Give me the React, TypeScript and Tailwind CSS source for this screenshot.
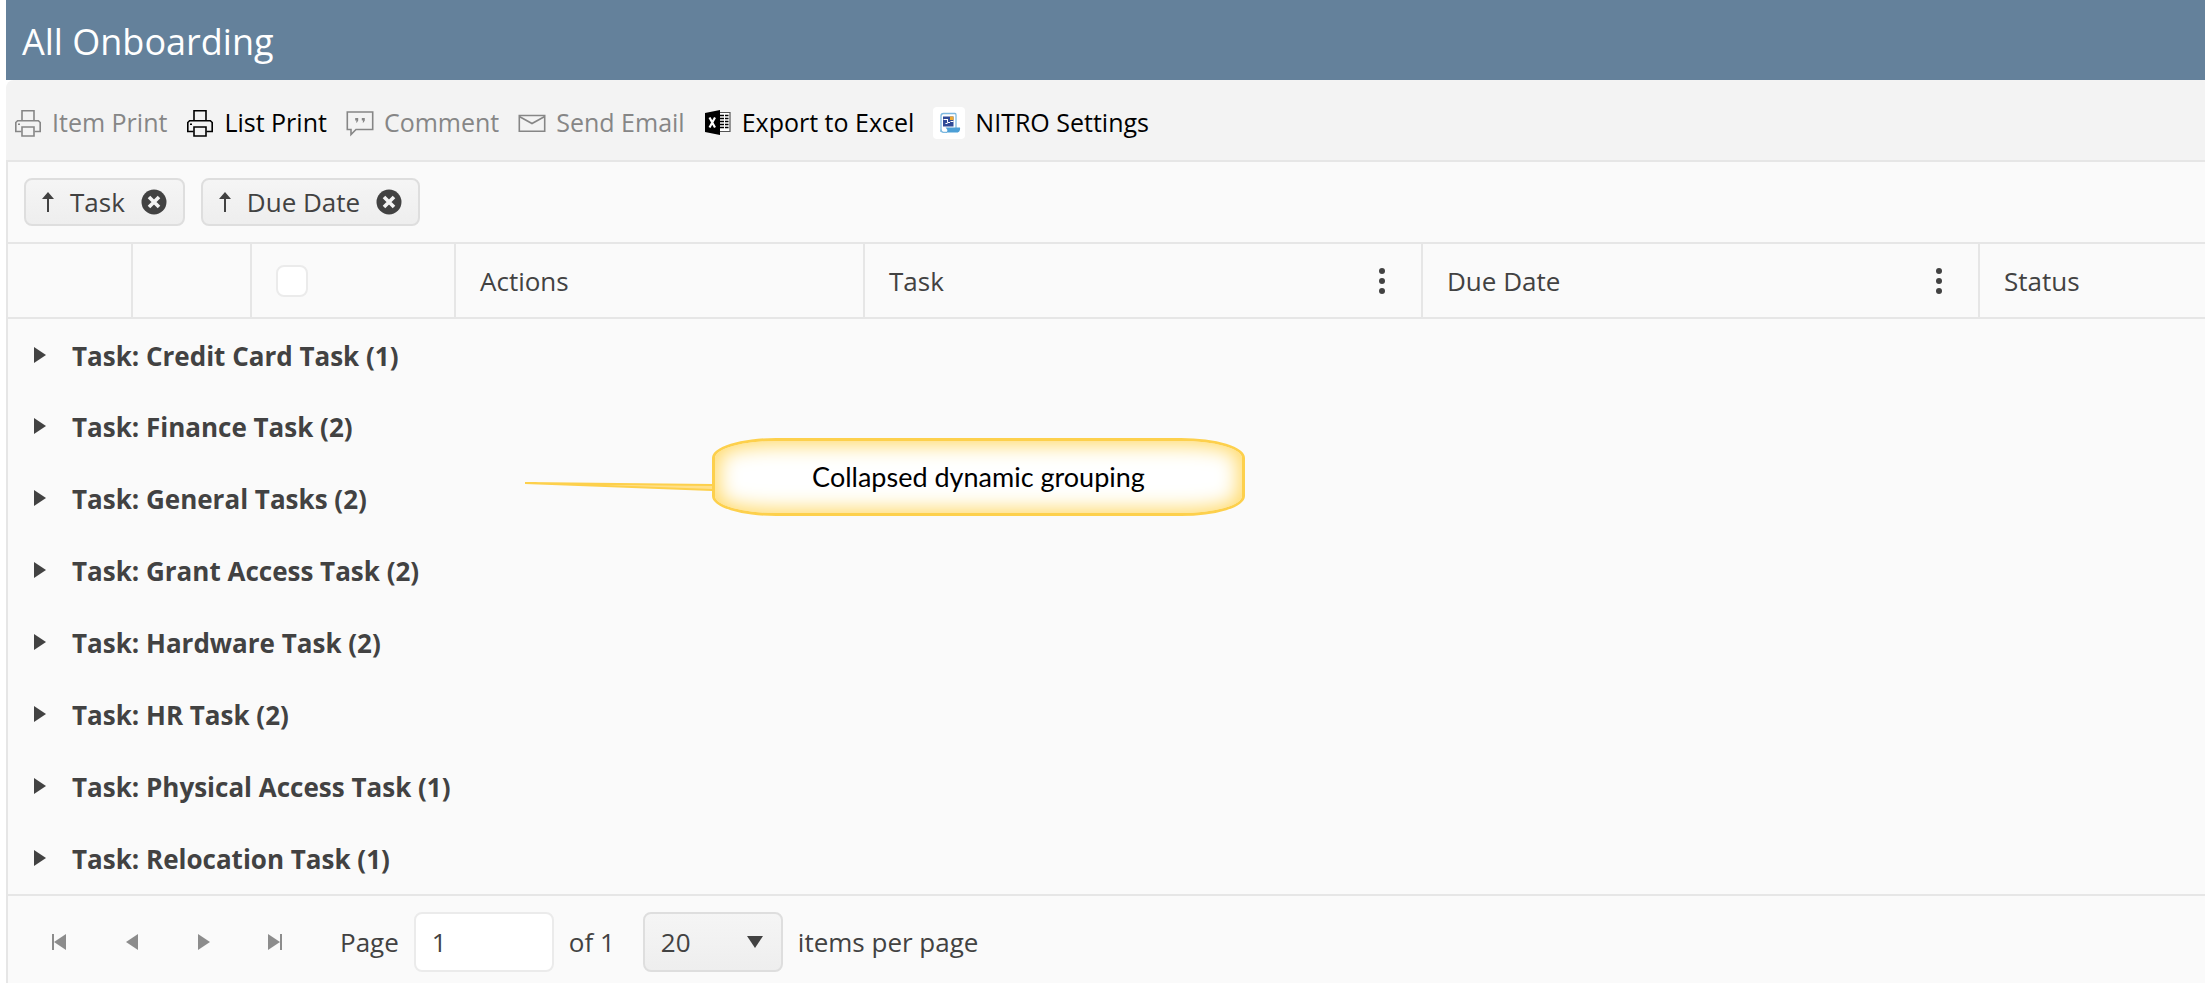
import type { ReactNode } from "react";

const groups = [
  { name: "Credit Card Task", count: 1 },
  { name: "Finance Task", count: 2 },
  { name: "General Tasks", count: 2 },
  { name: "Grant Access Task", count: 2 },
  { name: "Hardware Task", count: 2 },
  { name: "HR Task", count: 2 },
  { name: "Physical Access Task", count: 1 },
  { name: "Relocation Task", count: 1 },
];

function PrinterIcon() {
  return (
    <svg width="28" height="28" viewBox="0 0 28 28" fill="none" stroke="currentColor" strokeWidth="1.6">
      <path d="M8 11.7V1.8h12v9.9" />
      <path d="M7.5 22.5H1.8v-9l1.8-1.8h20.8l1.8 1.8v9h-5.7" />
      <path d="M8 18h12v9H8z" />
      <path d="M4 15.2h2" />
    </svg>
  );
}

function CommentIcon() {
  return (
    <svg width="28" height="28" viewBox="0 0 28 28" fill="none" stroke="currentColor" strokeWidth="1.6">
      <path d="M1.3 3h25.4v17.5H10L5 25.5v-5H1.3z" />
      <path d="M9.2 9h3v2.6l-1.2 2h-1l.6-2H9.2zM15.8 9h3v2.6l-1.2 2h-1l.6-2h-1.4z" fill="currentColor" stroke="none" />
    </svg>
  );
}

function MailIcon() {
  return (
    <svg width="28" height="28" viewBox="0 0 28 28" fill="none" stroke="currentColor" strokeWidth="1.6">
      <path d="M1.3 6.5h25.4v15.8H1.3z" />
      <path d="M1.3 7.5L14 14.5l12.7-7" />
    </svg>
  );
}

function ExcelIcon() {
  return (
    <svg width="28" height="28" viewBox="0 0 28 28" fill="none">
      <path d="M15 3.5h11v19H15z" fill="#fff" stroke="#555" strokeWidth="1.2" />
      <path
        d="M16 6.5h4M16 9.5h4M16 12.5h4M16 15.5h4M16 18.5h4M21 6.5h3.5M21 9.5h3.5M21 12.5h3.5M21 15.5h3.5M21 18.5h3.5"
        stroke="#000"
        strokeWidth="1.5"
      />
      <path d="M1 4L16 1v25L1 23z" fill="#000" />
      <path d="M5.5 8.5l5.5 10M11 8.5l-5.5 10" stroke="#fff" strokeWidth="2.2" />
    </svg>
  );
}

function NitroIcon() {
  return (
    <svg width="32" height="32" viewBox="0 0 32 32" fill="none" className="rounded bg-white">
      <path d="M8 25V9c0-1.7 1-2.5 2.5-2.5H22c.8 0 1 .6 1 1.5v13" stroke="#7db9e0" strokeWidth="1.3" />
      <path d="M8 22.5c0 2 1 2.8 2.5 2.8H14" stroke="#7db9e0" strokeWidth="1.3" />
      <path d="M10 9.5h10.500v10H10z" fill="#2f4a97" />
      <path d="M17 9.5h3.500v3.500H17z" fill="#f0a92e" />
      <path d="M10.500 12.500h3.500M14.500 12v3.500h2.500M17.500 14.500h3M12.500 16.500h2" stroke="#fff" strokeWidth="1" />
      <path d="M12.500 20.500h14.500c.5 2.800-.8 5-2.800 5H13.500c1.500-1.500 1.200-3-1-5z" fill="#4c9fd6" />
    </svg>
  );
}

function SortChip({ label }: { label: string }) {
  return (
    <div className="flex h-12 items-center rounded-lg border-2 border-[#dedede] bg-linear-to-b from-[#f5f5f5] to-[#eeeeee] px-4">
      <svg width="12" height="20" viewBox="0 0 12 20" fill="currentColor" className="mr-4">
        <path d="M6 0l6 7H7v13H5V7H0z" />
      </svg>
      <a href="#" className="leading-8">{label}</a>
      <button type="button" aria-label={`Remove ${label} grouping`} className="ml-4">
        <svg width="26" height="26" viewBox="0 0 26 26" className="block">
          <circle cx="13" cy="13" r="12.5" fill="currentColor" />
          <path d="M8 8l10 10M18 8L8 18" stroke="#f3f3f3" strokeWidth="3.6" />
        </svg>
      </button>
    </div>
  );
}

function ToolButton({ icon, label, disabled }: { icon: ReactNode; label: string; disabled?: boolean }) {
  return (
    <button type="button" disabled={disabled} className="flex items-center gap-2.5 whitespace-nowrap text-black disabled:text-[#868686]">
      <span className="pt-0.5">{icon}</span>
      <span>{label}</span>
    </button>
  );
}

function PagerButton({ label, path }: { label: string; path: string }) {
  return (
    <button type="button" aria-label={label} disabled className="flex h-15 w-18 items-center justify-center text-[#8c8c8c]">
      <svg width="16" height="16" viewBox="0 0 16 16" fill="currentColor">
        <path d={path} />
      </svg>
    </button>
  );
}

function ColumnHead({ label }: { label: string }) {
  return (
    <div className="flex items-center justify-between">
      <span>{label}</span>
      <button type="button" aria-label={`${label} column menu`} className="px-3">
        <svg width="6" height="26" viewBox="0 0 6 26" fill="currentColor">
          <circle cx="3" cy="3" r="3" />
          <circle cx="3" cy="13" r="3" />
          <circle cx="3" cy="23" r="3" />
        </svg>
      </button>
    </div>
  );
}

export default function App() {
  return (
    <div className="min-h-screen overflow-x-hidden bg-white pl-1.5 font-['Open_Sans','Noto_Sans',sans-serif] text-[26px] leading-9 text-[#424242]">
      {/* Title */}
      <header className="flex h-20 items-center bg-[#64819b] px-4 text-white">
        <h1 className="pt-1 text-4xl leading-12">All Onboarding</h1>
      </header>

      {/* Toolbar */}
      <div className="flex h-20 items-center gap-[19px] rounded-tl-lg bg-[#f3f3f3] px-2 pt-1 text-[25px]">
        <ToolButton icon={<PrinterIcon />} label="Item Print" disabled />
        <ToolButton icon={<PrinterIcon />} label="List Print" />
        <ToolButton icon={<CommentIcon />} label="Comment" disabled />
        <ToolButton icon={<MailIcon />} label="Send Email" disabled />
        <ToolButton icon={<ExcelIcon />} label="Export to Excel" />
        <ToolButton icon={<NitroIcon />} label="NITRO Settings" />
      </div>

      {/* Grid */}
      <main className="relative min-h-[calc(100vh-160px)] border-l-2 border-t-2 border-[#e6e6e6] bg-[#fafafa]">
        <div className="flex h-20 items-center gap-4 px-4">
          <SortChip label="Task" />
          <SortChip label="Due Date" />
        </div>

        <table className="w-full table-fixed border-collapse text-left">
          <colgroup>
            <col className="w-[124px]" />
            <col className="w-[119px]" />
            <col className="w-[204px]" />
            <col className="w-[409px]" />
            <col className="w-[558px]" />
            <col className="w-[557px]" />
            <col />
          </colgroup>
          <thead>
            <tr className="h-[75px] border-y-2 border-[#e6e6e6] [&>th]:border-r-2 [&>th]:border-[#e6e6e6] [&>th]:px-6 [&>th]:font-normal [&>th:last-child]:border-r-0">
              <th />
              <th />
              <th>
                <input
                  type="checkbox"
                  aria-label="Select all rows"
                  className="block size-8 appearance-none rounded-lg border-2 border-[#ebebeb] bg-white"
                />
              </th>
              <th>Actions</th>
              <th><ColumnHead label="Task" /></th>
              <th><ColumnHead label="Due Date" /></th>
              <th>Status</th>
            </tr>
          </thead>
          <tbody>
            {groups.map((group) => (
              <tr key={group.name} className="h-18">
                <td colSpan={7} className="pl-6">
                  <div className="flex items-center gap-6">
                    <button type="button" aria-label={`Expand ${group.name}`} className="pl-0.5">
                      <svg width="14" height="16" viewBox="0 0 14 16" fill="currentColor">
                        <path d="M0 0l12 8-12 8z" />
                      </svg>
                    </button>
                    <span className="pt-0.5 font-bold">
                      Task: {group.name} ({group.count})
                    </span>
                  </div>
                </td>
              </tr>
            ))}
          </tbody>
        </table>

        {/* Pager */}
        <div className="flex items-center border-t-2 border-[#e6e6e6] px-4 py-4">
          <PagerButton label="First page" path="M0 0h2v16H0zM14 0v16L2 8z" />
          <PagerButton label="Previous page" path="M14 0v16L2 8z" />
          <PagerButton label="Next page" path="M2 0l12 8-12 8z" />
          <PagerButton label="Last page" path="M12 0h2v16h-2zM0 0l12 8-12 8z" />
          <label className="ml-7 flex items-center gap-[15px]">
            Page
            <input
              type="text"
              defaultValue="1"
              className="h-15 w-35 rounded-lg border-2 border-[#ebebeb] bg-white px-4"
            />
          </label>
          <span className="ml-[15px]">of 1</span>
          <label className="ml-7 flex items-center gap-[15px]">
            <span className="relative">
              <select className="block h-15 w-35 appearance-none rounded-lg border-2 border-[#dedede] bg-linear-to-b from-[#f5f5f5] to-[#eeeeee] px-4">
                <option>20</option>
              </select>
              <svg width="16" height="12" viewBox="0 0 16 12" fill="currentColor" className="pointer-events-none absolute right-5 top-6">
                <path d="M0 0h16l-8 12z" />
              </svg>
            </span>
            items per page
          </label>
        </div>

        {/* Callout over the grid */}
        <div className="absolute left-[517px] top-[276px] flex items-center">
          <svg width="187" height="28" viewBox="0 0 187 28">
            <path d="M0 20L188 22v5z" fill="#ffe08a" stroke="#fdd04c" strokeWidth="2" />
          </svg>
          <div className="flex h-[78px] w-[533px] items-center justify-center rounded-[64px/20px] border-[3px] border-[#fdd04c] bg-white font-['Lato','Open_Sans',sans-serif] text-[27px] text-black shadow-[inset_0_0_20px_4px_#ffd966]">
            Collapsed dynamic grouping
          </div>
        </div>
      </main>
    </div>
  );
}
